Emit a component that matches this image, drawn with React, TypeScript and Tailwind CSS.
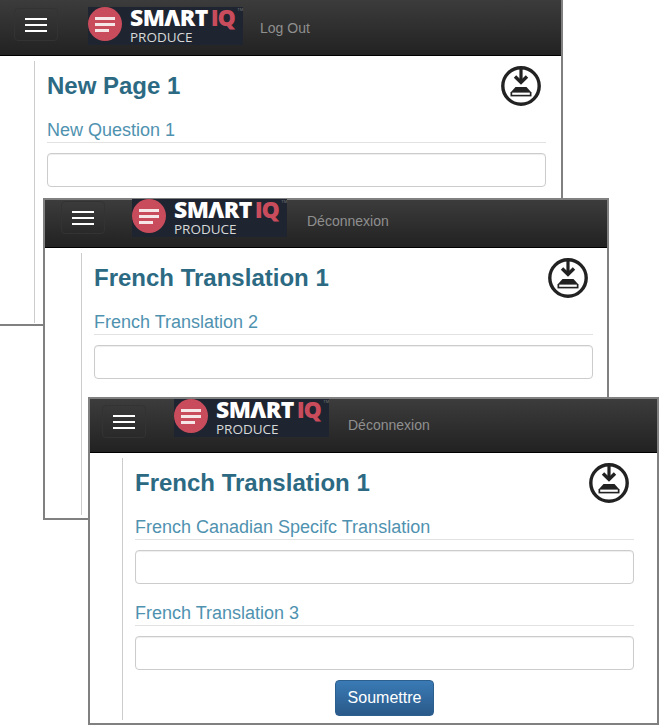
import React from 'react';

const DownloadIcon: React.FC = () => (
  <svg width="40" height="40" viewBox="0 0 40 40" fill="none">
    <circle cx="20" cy="20" r="18.2" stroke="#222222" strokeWidth="3.4" />
    <path d="M20 3v13" stroke="#222222" strokeWidth="3.2" />
    <path d="M14 10.5l6 5.8 6-5.8" stroke="#222222" strokeWidth="3.4" />
    <path d="M14.5 21h11l4.5 5H10z" fill="#222222" />
    <path d="M9.5 26h21v4.4h-21z" fill="#222222" />
    <path d="M11.2 26.6h17.6v2.2H11.2z" fill="#ffffff" />
  </svg>
);

const Logo: React.FC<{ className: string }> = ({ className }) => (
  <div className={`relative flex h-[38px] w-[155px] shrink-0 bg-[#1f2530] ${className}`}>
    <div className="flex h-[34px] w-[34px] shrink-0 flex-col items-start justify-center gap-[3px] rounded-full bg-[#c94c5c] pl-[7px]">
      <span className="h-[3px] w-[20px] bg-[#f5e6e8]" />
      <span className="h-[3px] w-[20px] bg-[#f5e6e8]" />
      <span className="h-[3px] w-[14px] bg-[#f5e6e8]" />
    </div>
    <div className="ml-[8px] flex flex-col font-['Open_Sans',sans-serif]">
      <div className="mt-[-1px] flex h-[24px] items-start text-[23px] leading-none font-extrabold tracking-[-0.6px]">
        <span className="text-white">SMΛRT</span>
        <span className="ml-[3px] tracking-[-1.2px] text-[#c94c5c]">IQ</span>
      </div>
      <span className="mt-[1px] text-[13.5px] leading-[15px] text-[#d8d8d8]">PRODUCE</span>
    </div>
    <span className="absolute top-[1px] right-0 text-[4px] leading-none text-[#777777]">TM</span>
  </div>
);

const Field: React.FC<{ label: string }> = ({ label }) => (
  <div>
    <div className="h-[23px] border-b border-[#e2e2e2] text-[18px] leading-[20px] text-[#4f92b0]">
      {label}
    </div>
    <div className="mt-[10px] h-[34px] rounded-[4px] border border-[#cccccc] bg-white shadow-[inset_0_1px_1px_rgba(0,0,0,0.07)]" />
  </div>
);

type WindowProps = {
  frame: string;
  header: string;
  logo: string;
  link: string;
  linkText: string;
  body: string;
  title: string;
  children: React.ReactNode;
};

const Window: React.FC<WindowProps> = ({ frame, header, logo, link, linkText, body, title, children }) => (
  <div className={`absolute flex flex-col border-[#808080] bg-white ${frame}`}>
    <div className={`flex shrink-0 items-start border-b border-black bg-gradient-to-b from-[#3c3c3c] to-[#222222] ${header}`}>
      <div className="flex h-[33px] w-[44px] shrink-0 flex-col items-center justify-center gap-[4px] rounded-[4px] border border-[#333333]">
        <span className="h-[2px] w-[22px] bg-white" />
        <span className="h-[2px] w-[22px] bg-white" />
        <span className="h-[2px] w-[22px] bg-white" />
      </div>
      <Logo className={logo} />
      <span className={`text-[14px] leading-[20px] text-[#8f8f8f] ${link}`}>{linkText}</span>
    </div>
    <div className={`mt-[5px] flex min-h-0 flex-col border-l border-[#cccccc] pl-[12px] ${body}`}>
      <div className="flex h-[54px] w-[499px] items-start justify-between">
        <h1 className="pt-[10px] text-[24px] leading-[30px] font-bold text-[#2c6a83]">{title}</h1>
        <div className="mr-[5px] pt-[5px]">
          <DownloadIcon />
        </div>
      </div>
      <div className="flex w-[499px] flex-col gap-[19px] pt-[5px]">{children}</div>
    </div>
  </div>
);

export default function App() {
  return (
    <div className="relative h-[726px] w-[659px] overflow-hidden bg-white font-['Liberation_Sans',Arial,sans-serif]">
      <Window
        frame="top-0 left-0 h-[326px] w-[563px] border-r-2 border-b-2"
        header="h-[56px] pt-[8px] pl-[14px]"
        logo="ml-[30px] mt-[-1px]"
        link="ml-[17px] mt-[10px]"
        linkText="Log Out"
        body="ml-[34px] h-[262px]"
        title="New Page 1"
      >
        <Field label="New Question 1" />
      </Window>

      <Window
        frame="top-[198px] left-[43px] h-[322px] w-[566px] border-2"
        header="h-[48px] pt-[1px] pl-[16px]"
        logo="ml-[27px] mt-[-2px]"
        link="ml-[20px] mt-[10px]"
        linkText="Déconnexion"
        body="ml-[36px] h-[262px]"
        title="French Translation 1"
      >
        <Field label="French Translation 2" />
      </Window>

      <Window
        frame="top-[397px] left-[88px] h-[328px] w-[571px] border-2"
        header="h-[54px] pt-[6px] pl-[12px]"
        logo="ml-[28px] mt-[-6px]"
        link="ml-[19px] mt-[10px]"
        linkText="Déconnexion"
        body="ml-[32px] h-[262px]"
        title="French Translation 1"
      >
        <Field label="French Canadian Specifc Translation" />
        <Field label="French Translation 3" />
        <div className="mt-[-9px] flex justify-center">
          <button className="h-[36px] w-[99px] rounded-[4px] border border-[#2b5f8e] bg-gradient-to-b from-[#3a7ab5] to-[#2a5a8a] text-[16px] text-white">
            Soumettre
          </button>
        </div>
      </Window>
    </div>
  );
}
